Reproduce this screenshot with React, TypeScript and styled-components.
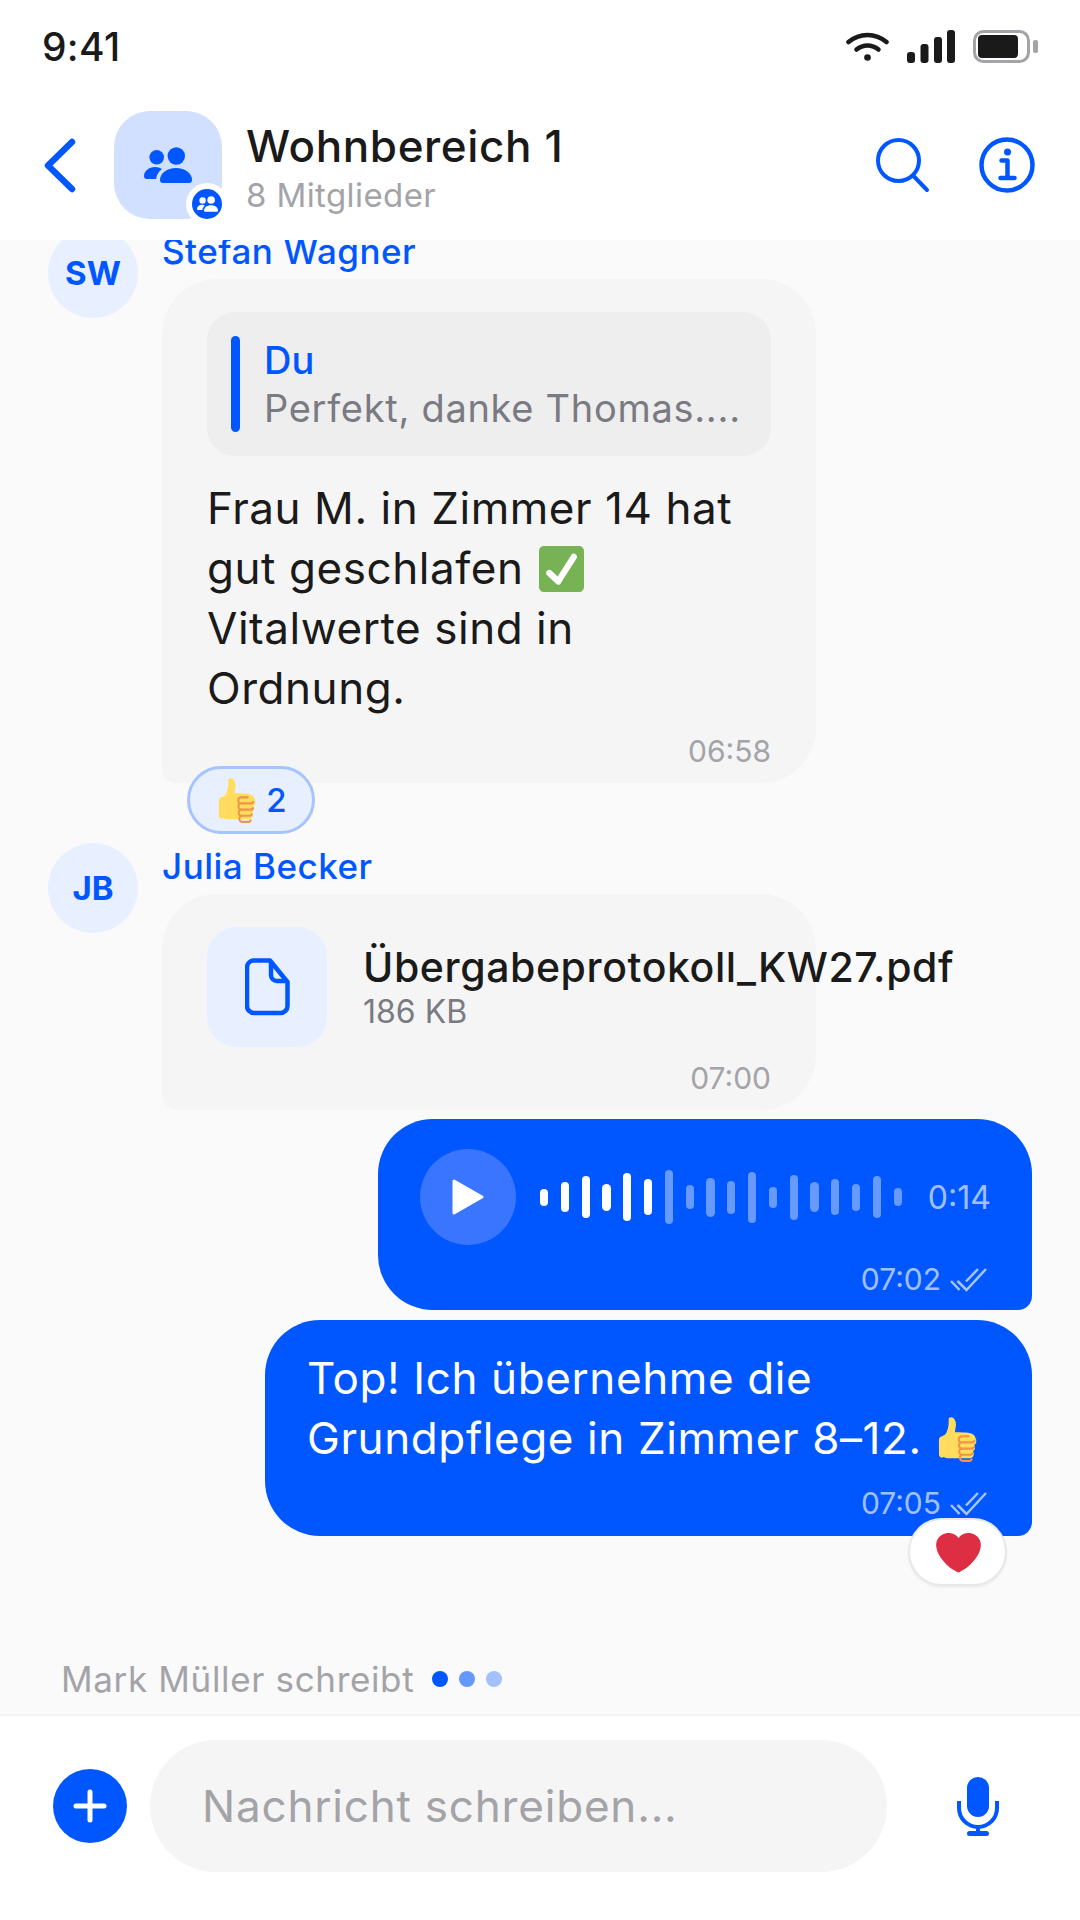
import styled, { createGlobalStyle } from "styled-components";

const BLUE = "#0057ff";

const GlobalStyle = createGlobalStyle`
  html, body { margin: 0; padding: 0; background: #fff; }
  * { box-sizing: border-box; }
  body { font-family: Inter, "Noto Sans", sans-serif; }
`;

const WAVE = [17, 30, 42, 27, 48, 36, 54, 24, 39, 33, 51, 21, 45, 30, 36, 27, 42, 18];

function DoubleCheck() {
  return (
    <svg width="37" height="25" viewBox="0 0 37 25" fill="none" stroke="currentColor" strokeWidth="2.500">
      <path d="M1 14l8.500 9" />
      <path d="M7.500 14l9 9L36 2" />
      <path d="M16 14.500L28 2" />
    </svg>
  );
}

function GroupIcon({ width }: { width: number }) {
  return (
    <svg width={width} height={(width * 36) / 48} viewBox="0 0 48 36" fill="currentColor">
      <circle cx="12.700" cy="10.300" r="7.300" />
      <circle cx="32.300" cy="9" r="8.700" />
      <path d="M0 29c0-5 5-9 11-9 3 0 5 .7 7 2-3 2-5 5-6 10H3c-2 0-3-1-3-3z" />
      <path d="M16 33c0-7 7-12 16-12s16 5 16 12c0 2-1 3-3 3H19c-2 0-3-1-3-3z" />
    </svg>
  );
}

function ThumbEmoji({ $width, $height }: { $width: number; $height: number }) {
  return (
    <EmojiSvg role="img" aria-label="👍" width={$width} height={$height} viewBox="0 0 36 36" preserveAspectRatio="none">
      <path fill="#FFDB5E" d="M34.956 17.916c0-.503-.12-.975-.321-1.404-1.341-4.326-7.619-4.01-16.549-4.221-1.493-.035-.639-1.798-.115-5.668.341-2.517-1.282-6.382-4.01-6.382-4.498 0-.171 3.548-3.985 11.962-2.037 4.495-6.584 1.979-6.584 6.448v10.217c0 1.759.172 3.449 2.644 3.727C7.992 31.106 7.391 33 11.125 33h18.692c1.906 0 3.457-1.551 3.457-3.458 0-.79-.27-1.515-.714-2.092 1.059-.594 1.783-1.714 1.783-3.011 0-.786-.267-1.509-.708-2.085 1.066-.593 1.795-1.716 1.795-3.015 0-.785-.266-1.508-.707-2.084.54-.477 1.233-1.377 1.233-2.339z" />
      <path fill="#EE9547" d="M23.020 21.249h8.604c1.170 0 2.268-.626 2.866-1.633.246-.415.109-.952-.307-1.199-.415-.247-.952-.108-1.199.307-.283.479-.806.775-1.361.775h-8.810c-.873 0-1.583-.71-1.583-1.583s.71-1.583 1.583-1.583H28.700c.483 0 .875-.392.875-.875s-.392-.875-.875-.875h-5.888c-1.838 0-3.333 1.495-3.333 3.333 0 1.025.475 1.932 1.205 2.544-.615.605-.998 1.445-.998 2.373 0 1.028.478 1.938 1.212 2.549-.611.604-.99 1.441-.99 2.367 0 1.120.559 2.108 1.409 2.713-.524.589-.852 1.356-.852 2.204 0 1.838 1.495 3.333 3.333 3.333h5.484c1.170 0 2.269-.625 2.867-1.632.247-.415.11-.952-.305-1.199-.416-.245-.953-.11-1.199.305-.285.479-.808.776-1.363.776h-5.484c-.873 0-1.583-.71-1.583-1.583s.71-1.583 1.583-1.583h6.506c1.170 0 2.270-.626 2.867-1.633.247-.416.11-.953-.305-1.199-.419-.251-.954-.11-1.199.305-.289.487-.799.777-1.363.777h-7.063c-.873 0-1.583-.711-1.583-1.584s.71-1.583 1.583-1.583h8.091c1.170 0 2.269-.625 2.867-1.632.247-.415.11-.952-.305-1.199-.417-.246-.953-.11-1.199.305-.289.486-.799.776-1.363.776H23.020c-.873 0-1.583-.71-1.583-1.583s.709-1.584 1.583-1.584z" />
    </EmojiSvg>
  );
}

function CheckEmoji() {
  return (
    <CheckSvg role="img" aria-label="✅" width="45" height="46" viewBox="0 0 36 36" preserveAspectRatio="none">
      <path fill="#77B255" d="M36 32c0 2.209-1.791 4-4 4H4c-2.209 0-4-1.791-4-4V4c0-2.209 1.791-4 4-4h28c2.209 0 4 1.791 4 4v28z" />
      <path fill="#fff" d="M29.280 6.362c-1.156-.751-2.704-.422-3.458.736L14.936 23.877l-5.029-4.650c-1.014-.938-2.596-.875-3.533.138-.937 1.014-.875 2.596.139 3.533l7.209 6.666c.48.445 1.090.665 1.696.665.673 0 1.534-.282 2.099-1.139.332-.506 12.500-19.270 12.500-19.270.751-1.159.421-2.707-.737-3.458z" />
    </CheckSvg>
  );
}

export default function App() {
  return (
    <Page>
      <GlobalStyle />
      <StatusBar>
        <Clock>9:41</Clock>
        <StatusIcons>
          <svg width="43" height="29" viewBox="0 0 43 29" fill="none" stroke="#1a1a1a" strokeWidth="4.500" strokeLinecap="round">
            <path d="M2.500 10c11-9.500 27-9.500 38 0" />
            <path d="M10.500 17.500c6.500-5.500 15.500-5.500 22 0" />
            <circle cx="21.500" cy="25.500" r="3.300" fill="#1a1a1a" stroke="none" />
          </svg>
          <svg width="48" height="33" viewBox="0 0 48 33" fill="#1a1a1a">
            <rect x="0" y="22" width="8" height="11" rx="3" />
            <rect x="13.500" y="14" width="8" height="19" rx="3" />
            <rect x="27" y="7" width="8" height="26" rx="3" />
            <rect x="40" y="0" width="8" height="33" rx="3" />
          </svg>
          <svg width="65" height="33" viewBox="0 0 65 33">
            <rect x="1.500" y="1.500" width="54" height="30" rx="9" fill="none" stroke="#a3a3a8" strokeWidth="3" />
            <rect x="5" y="5" width="40" height="23" rx="4" fill="#1a1a1a" />
            <rect x="60" y="10" width="5" height="13" rx="2" fill="#a3a3a8" />
          </svg>
        </StatusIcons>
      </StatusBar>

      <Header>
        <BackButton>
          <svg width="32" height="55" viewBox="0 0 32 55" fill="none" stroke={BLUE} strokeWidth="6.500" strokeLinecap="round" strokeLinejoin="round">
            <path d="M28 4L4 27.500 28 51" />
          </svg>
        </BackButton>
        <GroupAvatar>
          <GroupIcon width={48} />
          <GroupBadge>
            <GroupIcon width={21} />
          </GroupBadge>
        </GroupAvatar>
        <TitleBlock>
          <Title>Wohnbereich 1</Title>
          <Subtitle>8 Mitglieder</Subtitle>
        </TitleBlock>
        <HeaderActions>
          <svg width="54" height="55" viewBox="0 0 54 55" fill="none" stroke={BLUE} strokeWidth="4" strokeLinecap="round">
            <circle cx="22.500" cy="22.500" r="20.500" />
            <path d="M37 37.500L51 52" />
          </svg>
          <svg width="56" height="56" viewBox="0 0 56 56" fill="none" stroke={BLUE} strokeWidth="4.500" strokeLinecap="round" strokeLinejoin="round">
            <circle cx="28" cy="28" r="25.500" />
            <circle cx="28.500" cy="15" r="3.500" fill={BLUE} stroke="none" />
            <path d="M22.500 23.500h6v17M21.500 41h14" />
          </svg>
        </HeaderActions>
      </Header>

      <Body>
        <Messages>
          <Row>
            <Avatar>SW</Avatar>
            <Column>
              <SenderName>Stefan Wagner</SenderName>
              <Bubble>
                <Quote>
                  <QuoteBar />
                  <div>
                    <QuoteAuthor>Du</QuoteAuthor>
                    <QuoteText>Perfekt, danke Thomas....</QuoteText>
                  </div>
                </Quote>
                <MessageText>
                  Frau M. in Zimmer 14 hat
                  <br />
                  gut geschlafen <CheckEmoji />
                  <br />
                  Vitalwerte sind in
                  <br />
                  Ordnung.
                </MessageText>
                <Meta $top={13}>06:58</Meta>
              </Bubble>
              <ReactionChip>
                <ThumbEmoji $width={41} $height={45} />
                <ReactionCount>2</ReactionCount>
              </ReactionChip>
            </Column>
          </Row>

          <Row $top={9}>
            <Avatar>JB</Avatar>
            <Column>
              <SenderName>Julia Becker</SenderName>
              <Bubble>
                <FileRow>
                  <FileTile>
                    <svg width="45" height="58" viewBox="0 0 45 58" fill="none" stroke={BLUE} strokeWidth="4.500" strokeLinejoin="round">
                      <path d="M8 2.500h17L42.500 24v24a7 7 0 0 1-7 7H9a7 7 0 0 1-7-7V9a7 7 0 0 1 6-6.500z" />
                      <path d="M26 3v14a6 6 0 0 0 6 6h10" />
                    </svg>
                  </FileTile>
                  <FileInfo>
                    <FileName>Übergabeprotokoll_KW27.pdf</FileName>
                    <FileSize>186 KB</FileSize>
                  </FileInfo>
                </FileRow>
                <Meta $top={11}>07:00</Meta>
              </Bubble>
            </Column>
          </Row>

          <OutgoingBubble $top={9} $width={654} $pad="30px 45px 11px 42px">
            <VoiceRow>
              <PlayButton>
                <svg width="32" height="36" viewBox="0 0 32 36" fill="#fff" stroke="#fff" strokeWidth="3" strokeLinejoin="round">
                  <path d="M2 2l28 16L2 34z" />
                </svg>
              </PlayButton>
              <Wave>
                {WAVE.map((h, i) => (
                  <WaveBar key={i} $height={h} $played={i < 6} />
                ))}
              </Wave>
              <Duration>0:14</Duration>
            </VoiceRow>
            <OutgoingMeta $top={14}>
              07:02 <DoubleCheck />
            </OutgoingMeta>
          </OutgoingBubble>

          <OutgoingBubble $top={10} $width={767} $pad="28px 45px 13px 42px">
            <OutgoingText>
              Top! Ich übernehme die
              <br />
              Grundpflege in Zimmer 8–12. <ThumbEmoji $width={42} $height={45} />
            </OutgoingText>
            <OutgoingMeta $top={15}>
              07:05 <DoubleCheck />
            </OutgoingMeta>
            <HeartChip>
              <svg role="img" aria-label="❤️" width="45" height="40" viewBox="0 0 36 32.500" preserveAspectRatio="none">
                <path fill="#DD2E44" d="M35.885 9.833c0-5.450-4.418-9.868-9.867-9.868-3.308 0-6.227 1.633-8.018 4.129-1.791-2.496-4.710-4.129-8.017-4.129-5.450 0-9.868 4.417-9.868 9.868 0 .772.098 1.520.266 2.241C1.751 20.587 11.216 29.568 18 32.034c6.783-2.466 16.249-11.447 17.617-19.959.170-.721.268-1.469.268-2.242z" />
              </svg>
            </HeartChip>
          </OutgoingBubble>
        </Messages>

        <Typing>
          Mark Müller schreibt
          <Dots>
            <Dot $alpha={1} />
            <Dot $alpha={0.6} />
            <Dot $alpha={0.35} />
          </Dots>
        </Typing>
      </Body>

      <Composer>
        <AddButton>
          <svg width="34" height="34" viewBox="0 0 34 34" stroke="#fff" strokeWidth="5" strokeLinecap="round">
            <path d="M17 3v28M3 17h28" />
          </svg>
        </AddButton>
        <InputPill>Nachricht schreiben...</InputPill>
        <svg width="42" height="59" viewBox="0 0 42 59" fill={BLUE}>
          <rect x="10" y="0" width="22" height="40" rx="11" />
          <path d="M2 24v7a19 19 0 0 0 38 0v-7" fill="none" stroke={BLUE} strokeWidth="4" />
          <rect x="19" y="49" width="4" height="8" />
          <rect x="10" y="54" width="22" height="5" rx="2.500" />
        </svg>
      </Composer>
    </Page>
  );
}

const Page = styled.div`
  width: 1080px;
  height: 1920px;
  display: flex;
  flex-direction: column;
  background: #fff;
  overflow: hidden;
`;

const EmojiSvg = styled.svg`
  vertical-align: -8px;
  flex: none;
`;

const CheckSvg = styled(EmojiSvg)`
  margin-left: 3px;
`;

const StatusBar = styled.div`
  height: 92px;
  flex: none;
  display: flex;
  align-items: center;
  justify-content: space-between;
  padding: 0 42px 0 42px;
`;

const Clock = styled.div`
  font-size: 39px;
  font-weight: 500;
  letter-spacing: 0.3px;
  color: #1a1a1a;
`;

const StatusIcons = styled.div`
  display: flex;
  align-items: center;
  gap: 18px;
`;

const Header = styled.div`
  height: 148px;
  flex: none;
  display: flex;
  align-items: center;
  padding: 0 45px 2px 44px;
  background: #fff;
  position: relative;
  z-index: 2;
`;

const BackButton = styled.div`
  width: 70px;
  display: flex;
`;

const GroupAvatar = styled.div`
  width: 108px;
  height: 108px;
  border-radius: 36px;
  background: #d1e0ff;
  color: ${BLUE};
  display: flex;
  align-items: center;
  justify-content: center;
  position: relative;
  flex: none;
`;

const GroupBadge = styled.div`
  position: absolute;
  right: -6px;
  bottom: -6px;
  width: 42px;
  height: 42px;
  border-radius: 50%;
  border: 6px solid #fff;
  background: ${BLUE};
  color: #fff;
  display: flex;
  align-items: center;
  justify-content: center;
`;

const TitleBlock = styled.div`
  margin: 3px 0 0 24px;
  flex: 1;
`;

const Title = styled.div`
  font-size: 44px;
  line-height: 54px;
  font-weight: 500;
  letter-spacing: 0.6px;
  color: #1a1a1a;
`;

const Subtitle = styled.div`
  font-size: 33px;
  line-height: 40px;
  letter-spacing: 0.4px;
  color: #a3a3a8;
  margin-top: 2px;
`;

const HeaderActions = styled.div`
  display: flex;
  align-items: center;
  gap: 49px;
`;

const Body = styled.div`
  flex: 1;
  min-height: 0;
  background: #fafafa;
  display: flex;
  flex-direction: column;
`;

const Messages = styled.div`
  flex: 1;
  min-height: 0;
  display: flex;
  flex-direction: column;
  margin-top: -12px;
  padding: 0 48px;
`;

const Row = styled.div<{ $top?: number }>`
  display: flex;
  gap: 24px;
  margin-top: ${(p) => p.$top ?? 0}px;
`;

const Avatar = styled.div`
  width: 90px;
  height: 90px;
  flex: none;
  border-radius: 50%;
  background: #e8efff;
  color: ${BLUE};
  font-size: 33px;
  font-weight: 700;
  display: flex;
  align-items: center;
  justify-content: center;
`;

const Column = styled.div`
  display: flex;
  flex-direction: column;
  align-items: flex-start;
`;

const SenderName = styled.div`
  height: 51px;
  font-size: 35px;
  line-height: 46px;
  font-weight: 500;
  letter-spacing: 0.5px;
  color: ${BLUE};
`;

const Bubble = styled.div`
  width: 654px;
  padding: 33px 45px 12px;
  background: #f5f5f5;
  border-radius: 55px 55px 55px 14px;
`;

const Quote = styled.div`
  display: flex;
  align-items: center;
  gap: 24px;
  height: 144px;
  padding: 0 24px;
  background: #eeeeee;
  border-radius: 28px;
`;

const QuoteBar = styled.div`
  width: 9px;
  height: 96px;
  border-radius: 5px;
  background: ${BLUE};
  flex: none;
`;

const QuoteAuthor = styled.div`
  font-size: 38px;
  line-height: 48px;
  font-weight: 500;
  color: ${BLUE};
`;

const QuoteText = styled.div`
  font-size: 38px;
  line-height: 48px;
  letter-spacing: 0.7px;
  color: #7a7a82;
  white-space: nowrap;
`;

const MessageText = styled.div`
  margin-top: 22px;
  font-size: 44px;
  line-height: 60px;
  letter-spacing: 0.55px;
  color: #1a1a1a;
`;

const Meta = styled.div<{ $top: number }>`
  margin-top: ${(p) => p.$top}px;
  height: 40px;
  font-size: 30px;
  line-height: 40px;
  color: #a3a3a8;
  text-align: right;
`;

const ReactionChip = styled.div`
  margin: -17px 0 0 25px;
  width: 128px;
  height: 68px;
  border-radius: 34px;
  background: #e8efff;
  border: 3px solid #a6c4ff;
  display: flex;
  align-items: center;
  justify-content: center;
  gap: 10px;
  position: relative;
`;

const ReactionCount = styled.span`
  font-size: 33px;
  font-weight: 500;
  color: ${BLUE};
`;

const FileRow = styled.div`
  display: flex;
  align-items: center;
  gap: 36px;
`;

const FileTile = styled.div`
  width: 120px;
  height: 120px;
  flex: none;
  border-radius: 30px;
  background: #e8efff;
  display: flex;
  align-items: center;
  justify-content: center;
`;

const FileInfo = styled.div`
  white-space: nowrap;
`;

const FileName = styled.div`
  font-size: 41px;
  line-height: 50px;
  font-weight: 500;
  letter-spacing: 0.58px;
  color: #1a1a1a;
`;

const FileSize = styled.div`
  font-size: 32px;
  line-height: 40px;
  color: #7a7a82;
`;

const OutgoingBubble = styled.div<{ $top: number; $width: number; $pad: string }>`
  align-self: flex-end;
  position: relative;
  flex: none;
  width: ${(p) => p.$width}px;
  margin-top: ${(p) => p.$top}px;
  padding: ${(p) => p.$pad};
  background: ${BLUE};
  border-radius: 55px 55px 14px 55px;
  color: #fff;
`;

const VoiceRow = styled.div`
  display: flex;
  align-items: center;
`;

const PlayButton = styled.div`
  width: 96px;
  height: 96px;
  flex: none;
  border-radius: 50%;
  background: #3a75ff;
  display: flex;
  align-items: center;
  justify-content: center;
`;

const Wave = styled.div`
  margin-left: 24px;
  display: flex;
  align-items: center;
  gap: 12.550px;
`;

const WaveBar = styled.div<{ $height: number; $played: boolean }>`
  width: 8.250px;
  height: ${(p) => p.$height}px;
  border-radius: 5px;
  background: ${(p) => (p.$played ? "#fff" : "rgba(255, 255, 255, 0.4)")};
`;

const Duration = styled.div`
  margin-left: 26px;
  font-size: 32px;
  color: rgba(255, 255, 255, 0.65);
`;

const OutgoingMeta = styled.div<{ $top: number }>`
  margin-top: ${(p) => p.$top}px;
  height: 40px;
  display: flex;
  align-items: center;
  justify-content: flex-end;
  gap: 9px;
  font-size: 30px;
  color: rgba(255, 255, 255, 0.65);
`;

const OutgoingText = styled.div`
  font-size: 44px;
  line-height: 60px;
  letter-spacing: 0.6px;
  color: #fff;
`;

const HeartChip = styled.div`
  position: absolute;
  right: 25px;
  bottom: -50px;
  width: 99px;
  height: 68px;
  padding: 2px 0 0 2px;
  border-radius: 34px;
  background: #fff;
  border: 2px solid #e8e8e8;
  box-shadow: 0 2px 2px rgba(0, 0, 0, 0.05);
  display: flex;
  align-items: center;
  justify-content: center;
`;

const Typing = styled.div`
  flex: none;
  height: 70px;
  padding-left: 61px;
  display: flex;
  align-items: center;
  font-size: 35px;
  letter-spacing: 0.65px;
  color: #a3a3a8;
  gap: 18px;
`;

const Dots = styled.div`
  display: flex;
  gap: 11px;
`;

const Dot = styled.div<{ $alpha: number }>`
  width: 16px;
  height: 16px;
  border-radius: 50%;
  background: ${BLUE};
  opacity: ${(p) => p.$alpha};
`;

const Composer = styled.div`
  height: 206px;
  flex: none;
  border-top: 2px solid #f2f2f2;
  display: flex;
  align-items: center;
  padding: 0 0 24px 53px;
`;

const AddButton = styled.div`
  width: 74px;
  height: 74px;
  flex: none;
  border-radius: 50%;
  background: ${BLUE};
  display: flex;
  align-items: center;
  justify-content: center;
`;

const InputPill = styled.div`
  margin: 0 70px 0 23px;
  width: 737px;
  height: 132px;
  flex: none;
  border-radius: 66px;
  background: #f5f5f5;
  display: flex;
  align-items: center;
  padding-left: 52px;
  font-size: 44px;
  letter-spacing: 0.8px;
  color: #a3a3a8;
`;
